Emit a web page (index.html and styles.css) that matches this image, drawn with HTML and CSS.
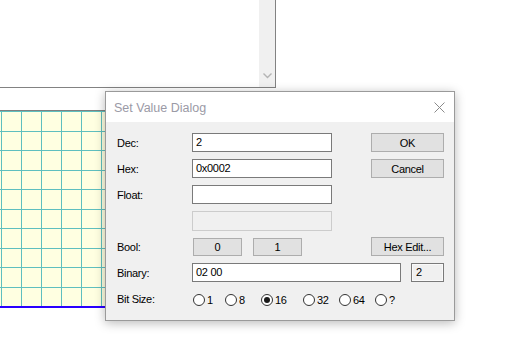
FILE: index.html
```html
<!DOCTYPE html>
<html lang="en">
<head>
    <meta charset="UTF-8">
    <title>Set Value Dialog</title>
    <link rel="stylesheet" href="styles.css">
</head>
<body>
    <div class="desk">
        <div class="log">
            <div class="log-text"></div>
            <div class="log-scroll">
                <svg class="chevron" width="9" height="6" viewBox="0 0 9 6"><path d="M0.5 0.5 L4.5 4.5 L8.5 0.5" fill="none" stroke="#b4b4b4" stroke-width="1.4"/></svg>
            </div>
        </div>

        <div class="chart"></div>

        <div class="dialog">
            <div class="title-bar">
                <span class="title">Set Value Dialog</span>
                <svg class="close" width="11" height="11" viewBox="0 0 11 11"><path d="M0.5 0.5 L10.5 10.5 M10.5 0.5 L0.5 10.5" stroke="#8a8a8a" stroke-width="1"/></svg>
            </div>
            <div class="body">
                <div class="row">
                    <span class="label">Dec:</span>
                    <div class="field">2</div>
                    <span class="spacer"></span>
                    <button class="btn side">OK</button>
                </div>
                <div class="row">
                    <span class="label">Hex:</span>
                    <div class="field">0x0002</div>
                    <span class="spacer"></span>
                    <button class="btn side">Cancel</button>
                </div>
                <div class="row">
                    <span class="label">Float:</span>
                    <div class="field"></div>
                </div>
                <div class="row">
                    <span class="label"></span>
                    <div class="field disabled"></div>
                </div>
                <div class="row">
                    <span class="label">Bool:</span>
                    <button class="btn bool">0</button>
                    <button class="btn bool second">1</button>
                    <span class="spacer"></span>
                    <button class="btn side">Hex Edit...</button>
                </div>
                <div class="row">
                    <span class="label">Binary:</span>
                    <div class="field wide">02 00</div>
                    <div class="count">2</div>
                </div>
                <div class="row">
                    <span class="label">Bit Size:</span>
                    <div class="radios">
                        <span class="opt w32"><span class="radio"></span>1</span>
                        <span class="opt w36"><span class="radio"></span>8</span>
                        <span class="opt w42"><span class="radio checked"></span>16</span>
                        <span class="opt w36"><span class="radio"></span>32</span>
                        <span class="opt w36"><span class="radio"></span>64</span>
                        <span class="opt"><span class="radio"></span>?</span>
                    </div>
                </div>
            </div>
        </div>
    </div>
</body>
</html>
```

FILE: styles.css
```css
body {
    margin: 0;
    background: #fff;
    font-family: "Liberation Sans", Arial, sans-serif;
    font-size: 11px;
    color: #000;
    overflow: hidden;
}
.desk {
    position: relative;
    width: 531px;
    height: 339px;
}
.log {
    width: 275px;
    height: 87px;
    border-right: 1px solid #828282;
    border-bottom: 1px solid #828282;
    display: flex;
}
.log-text {
    flex: 1;
}
.log-scroll {
    width: 16px;
    background: #f0f0f0;
    display: flex;
    align-items: flex-end;
    justify-content: center;
    padding-bottom: 8px;
    box-sizing: border-box;
}
.chart {
    margin-top: 22px;
    width: 330px;
    height: 195px;
    border-top: 1px solid #808080;
    border-bottom: 2px solid #2a00ff;
    background-color: #ffffe1;
    background-image:
        linear-gradient(to right, #5fbfbf 1px, transparent 1px),
        linear-gradient(to bottom, transparent 19px, #5fbfbf 19px, #5fbfbf 20px, transparent 20px, transparent 38px, #5fbfbf 38px);
    background-size: 20px 100%, 100% 39px;
    background-position: 1px 0, 0 1px;
}

/* dialog */
.dialog {
    position: absolute;
    left: 105px;
    top: 91px;
    width: 350px;
    height: 230px;
    box-sizing: border-box;
    border: 1px solid #9a9a9a;
    background: #f0f0f0;
    box-shadow: 0 2px 10px rgba(0, 0, 0, 0.28);
}
.title-bar {
    height: 30px;
    background: #fff;
    display: flex;
    align-items: center;
    padding: 0 9px 0 8px;
}
.title {
    flex: 1;
    font-size: 12.5px;
    color: #9b9aa6;
    padding-top: 1px;
}
.close {
    margin-top: 1px;
}
.body {
    padding: 11px 10px 0 11px;
}
.row {
    display: flex;
    align-items: center;
    height: 19px;
    margin-bottom: 7px;
    letter-spacing: -0.3px;
}
.label {
    width: 75px;
    flex: none;
}
.field {
    width: 140px;
    height: 19px;
    box-sizing: border-box;
    border: 1px solid #7a7a7a;
    background: #fff;
    padding: 2px 0 0 3px;
    flex: none;
}
.field.disabled {
    height: 20px;
    margin-top: 1px;
    border-color: #cccccc;
    background: #f0f0f0;
}
.field.wide {
    width: 209px;
}
.count {
    width: 33px;
    height: 19px;
    box-sizing: border-box;
    margin-left: 10px;
    border: 1px solid #7a7a7a;
    box-shadow: inset 0 0 0 1px #fafafa;
    background: #f0f0f0;
    padding: 2px 0 0 4px;
}
.spacer {
    flex: 1;
}
.btn {
    height: 19px;
    box-sizing: border-box;
    border: 1px solid #adadad;
    background: #e1e1e1;
    font-family: inherit;
    font-size: 11px;
    letter-spacing: -0.3px;
    color: #000;
    padding: 0;
}
.btn.side {
    width: 73px;
}
.btn.bool {
    width: 49px;
    height: 18px;
    margin-left: 1px;
    margin-top: 1px;
}
.btn.bool.second {
    margin-left: 11px;
}
.radios {
    display: flex;
    align-items: center;
    padding-top: 3px;
}
.opt {
    display: flex;
    align-items: center;
    gap: 2px;
}
.w32 { width: 32px; }
.w36 { width: 36px; }
.w42 { width: 42px; }
.radio {
    width: 12px;
    height: 12px;
    box-sizing: border-box;
    border: 1px solid #333;
    border-radius: 50%;
    background: #fff;
    position: relative;
    margin-left: 1px;
}
.radio.checked::after {
    content: "";
    position: absolute;
    left: 2px;
    top: 2px;
    width: 6px;
    height: 6px;
    border-radius: 50%;
    background: #1a1a1a;
}
```
